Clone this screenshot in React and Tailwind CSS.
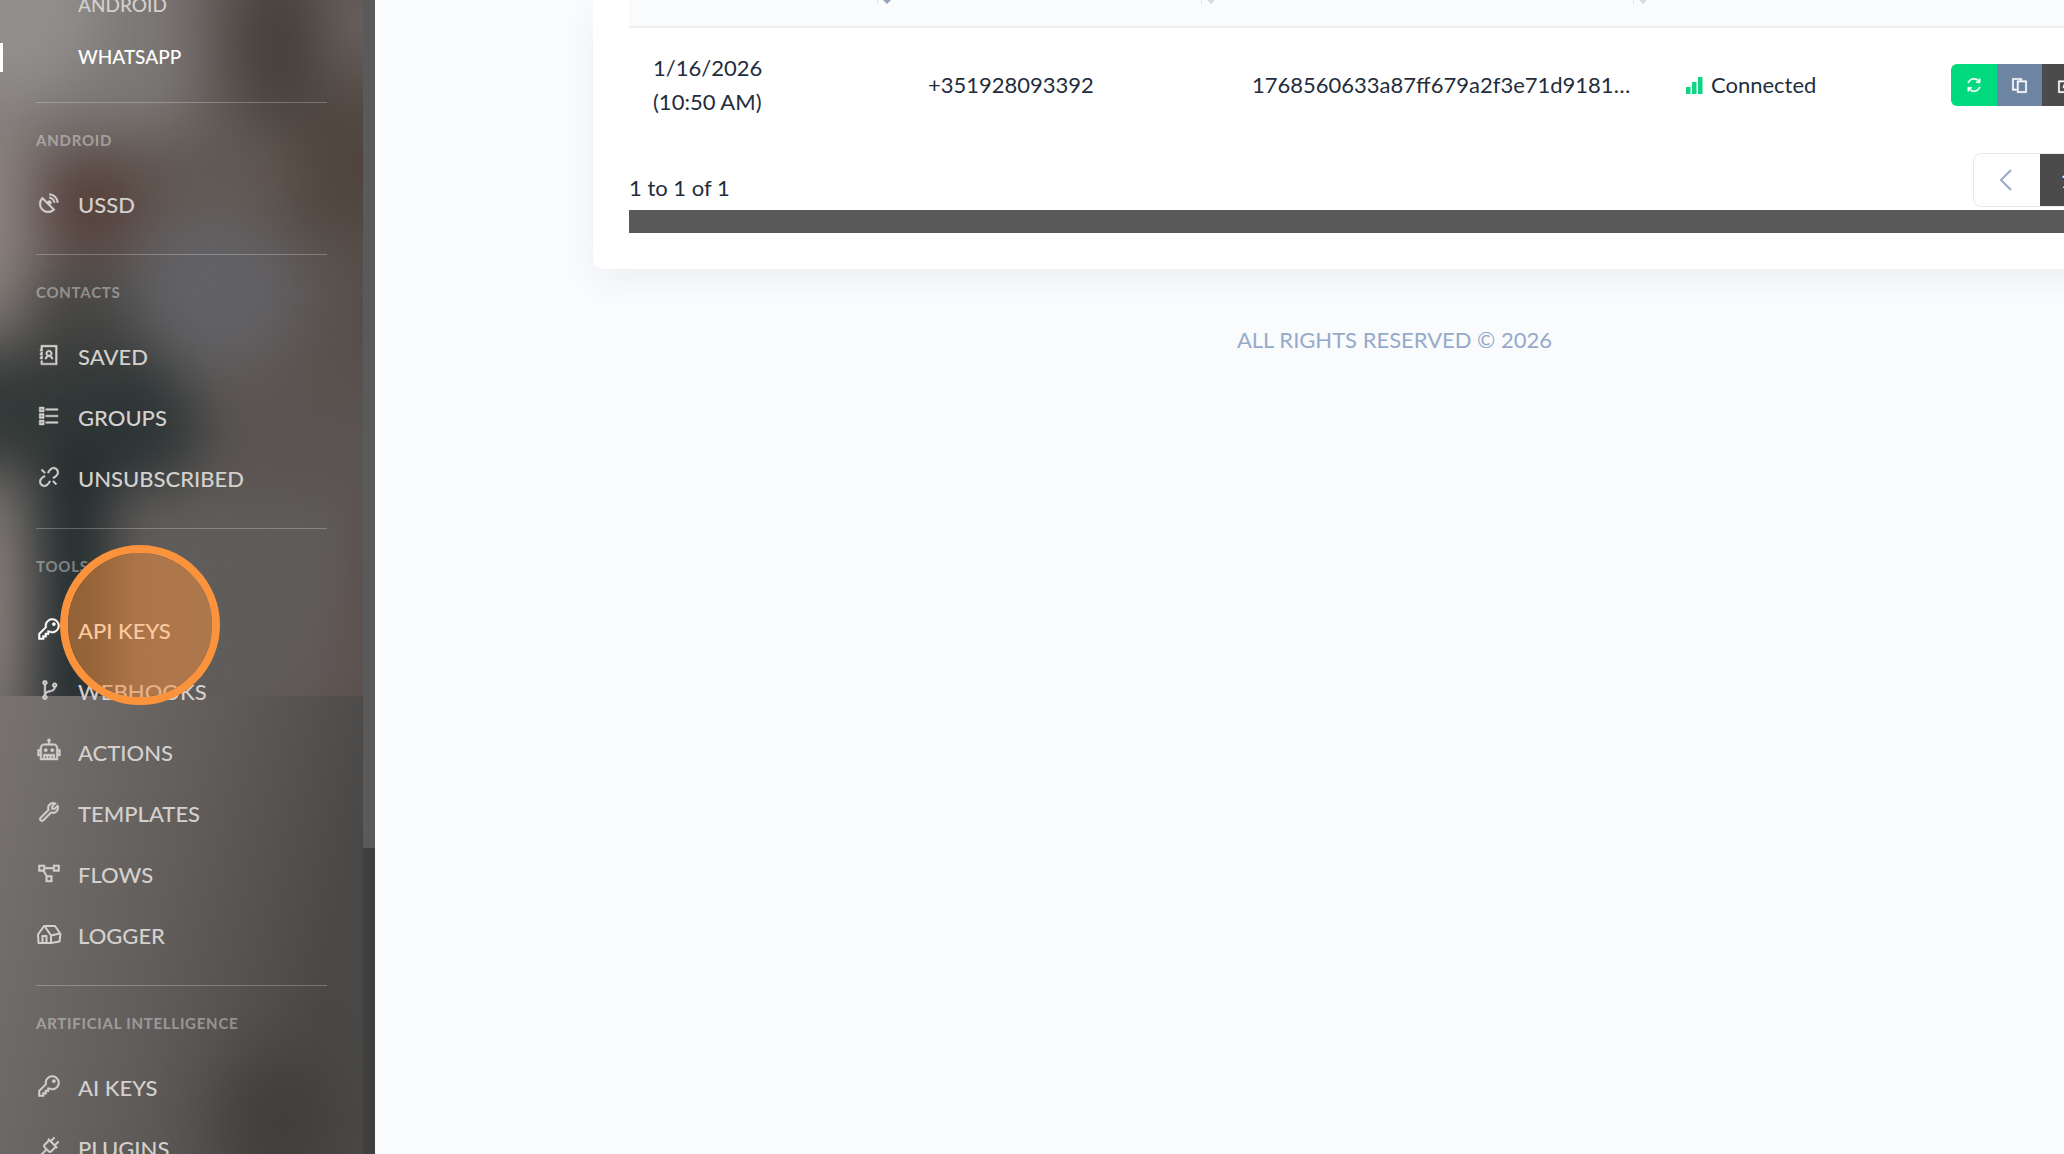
import React from 'react';
import {
    LiaSatelliteDishSolid,
    LiaAddressBook,
    LiaListSolid,
    LiaUnlinkSolid,
    LiaKeySolid,
    LiaCodeBranchSolid,
    LiaRobotSolid,
    LiaWrenchSolid,
    LiaProjectDiagramSolid,
    LiaPlugSolid,
    LiaSyncSolid,
    LiaCopySolid,
    LiaEditSolid,
} from 'react-icons/lia';

const HouseIcon = ({ className }) => (
    <svg viewBox="0 0 26 26" className={className} fill="none" aria-hidden="true">
        <g stroke="currentColor" strokeWidth="2" strokeLinejoin="round">
            <path d="M2 13.5 L8 5 H19 L24.5 13 L23.5 20.5 L15 22 H2.5 Z" />
            <path d="M8.5 5 L15 14.5 L24 12.5 M15 14.5 V22 M6.5 22 V15 H10.5 V22" />
        </g>
    </svg>
);

const SignalIcon = () => (
    <svg viewBox="0 0 17 17" className="h-[17px] w-[17px] fill-[#0fd583]" aria-hidden="true">
        <rect x="0" y="10" width="4.5" height="7" />
        <rect x="6" y="5" width="4.5" height="12" />
        <rect x="12" y="0" width="4.5" height="17" />
    </svg>
);

const sections = [
    { title: 'Android', items: [{ label: 'USSD', icon: LiaSatelliteDishSolid }] },
    {
        title: 'Contacts',
        items: [
            { label: 'Saved', icon: LiaAddressBook },
            { label: 'Groups', icon: LiaListSolid },
            { label: 'Unsubscribed', icon: LiaUnlinkSolid },
        ],
    },
    {
        title: 'Tools',
        items: [
            { label: 'API Keys', icon: LiaKeySolid, active: true },
            { label: 'Webhooks', icon: LiaCodeBranchSolid },
            { label: 'Actions', icon: LiaRobotSolid },
            { label: 'Templates', icon: LiaWrenchSolid },
            { label: 'Flows', icon: LiaProjectDiagramSolid },
            { label: 'Logger', icon: HouseIcon },
        ],
    },
    {
        title: 'Artificial Intelligence',
        items: [
            { label: 'AI Keys', icon: LiaKeySolid },
            { label: 'Plugins', icon: LiaPlugSolid },
        ],
    },
];

// Blurred photo behind the navigation
const SidebarBackdrop = () => (
    <svg className="absolute inset-0 h-full w-full" viewBox="0 0 363 1154" preserveAspectRatio="none" aria-hidden="true">
        <defs>
            <linearGradient id="top" x1="0" x2="1">
                <stop offset="0" stopColor="#736d6a" />
                <stop offset="0.5" stopColor="#625c59" />
                <stop offset="1" stopColor="#574f4b" />
            </linearGradient>
            <linearGradient id="bottom" x1="0" x2="1" y1="0" y2="0.3">
                <stop offset="0" stopColor="#787371" />
                <stop offset="0.55" stopColor="#605d5b" />
                <stop offset="1" stopColor="#4a4846" />
            </linearGradient>
            <filter id="soft" filterUnits="userSpaceOnUse" x="-200" y="-200" width="800" height="1600" colorInterpolationFilters="sRGB">
                <feGaussianBlur stdDeviation="28" />
            </filter>
            <clipPath id="upper">
                <rect width="363" height="696" />
            </clipPath>
        </defs>
        <rect width="363" height="696" fill="url(#top)" />
        <g clipPath="url(#upper)">
            <g filter="url(#soft)">
                <rect x="-100" y="-100" width="290" height="230" fill="#7c7876" />
                <ellipse cx="10" cy="10" rx="90" ry="90" fill="#928e8c" />
                <ellipse cx="280" cy="45" rx="40" ry="80" fill="#443f3b" />
                <ellipse cx="365" cy="20" rx="45" ry="50" fill="#6a615f" />
                <rect x="280" y="100" width="160" height="130" fill="#50463f" />
                <ellipse cx="210" cy="175" rx="90" ry="50" fill="#615953" />
                <ellipse cx="90" cy="205" rx="52" ry="50" fill="#553f3a" />
                <ellipse cx="-20" cy="210" rx="52" ry="110" fill="#8b827f" />
                <rect x="30" y="270" width="110" height="80" fill="#454442" />
                <ellipse cx="215" cy="290" rx="85" ry="75" fill="#626165" />
                <rect x="-100" y="350" width="270" height="120" fill="#333938" />
                <ellipse cx="145" cy="430" rx="60" ry="60" fill="#2e3536" />
                <rect x="230" y="390" width="210" height="110" fill="#5a5452" />
                <rect x="38" y="450" width="72" height="300" fill="#1e282a" />
                <ellipse cx="-25" cy="610" rx="52" ry="100" fill="#857d79" />
                <rect x="160" y="500" width="190" height="210" fill="#5f5d5c" />
                <path d="M375 450 L345 560 L290 710 L375 710 Z" fill="#67504d" opacity="0.4" />
            </g>
        </g>
        <rect y="696" width="363" height="458" fill="url(#bottom)" />
        <ellipse cx="275" cy="1120" rx="60" ry="70" fill="#3f3a36" opacity="0.7" filter="url(#soft)" />
    </svg>
);

const Sidebar = () => (
    <aside className="relative flex h-screen w-[375px] shrink-0 overflow-hidden bg-[#3f3f3f] text-[#d3d0ce]">
        <div className="relative flex-1 overflow-hidden">
            <SidebarBackdrop />
            <nav className="relative -mt-[21px]">
                <ul className="mb-[19px] text-[19px] font-medium uppercase">
                    <li>
                        <a href="#android" className="flex h-[52px] items-center pl-[78px]">Android</a>
                    </li>
                    <li className="flex h-[52px] items-center">
                        <span className="h-[29px] w-[3px] bg-white"></span>
                        <a href="#whatsapp" className="pl-[75px] text-white">WhatsApp</a>
                    </li>
                </ul>
                {sections.map(({ title, items }) => (
                    <section key={title} className="mx-9 border-t border-white/25 pb-[19px]">
                        <h6 className="mt-[22px] mb-[19px] text-[15px] leading-[30px] font-bold tracking-wider text-white/40 uppercase">{title}</h6>
                        <ul>
                            {items.map(({ label, icon: Icon, active }) => (
                                <li key={label}>
                                    <a
                                        href={`#${label.toLowerCase().replace(' ', '-')}`}
                                        className={`flex h-[61px] items-center gap-4 text-[22px] font-medium uppercase ${active ? 'text-white' : ''}`}
                                    >
                                        <Icon className="mb-1 h-[26px] w-[26px] shrink-0 stroke-current stroke-[0.6px]" />
                                        <span>{label}</span>
                                    </a>
                                </li>
                            ))}
                        </ul>
                    </section>
                ))}
            </nav>
        </div>
        <div className="h-[848px] w-3 bg-[#5a5a5a]"></div>
        {/* Click highlight */}
        <div className="pointer-events-none absolute top-[545px] left-[60px] h-40 w-40 rounded-full border-8 border-[#fb923c] bg-[#fb923c]/50 bg-clip-padding"></div>
    </aside>
);

const SortMark = ({ active }) => (
    <svg viewBox="0 0 16 5" className={`ml-auto h-[5px] w-4 ${active ? 'text-[#95a3b8]' : 'text-[#d5dbe1]'}`} aria-hidden="true">
        <path d="M1.5 0 V4" stroke="#dfe3e7" strokeWidth="1" />
        <path d="M7 0 H15 L11 4 Z" fill="currentColor" />
    </svg>
);

const DevicesTable = () => (
    <table className="w-full table-fixed border-collapse text-left">
        <colgroup>
            <col className="w-[275px]" />
            <col className="w-[324px]" />
            <col className="w-[432px]" />
            <col className="w-[267px]" />
            <col />
        </colgroup>
        <thead className="border-b-2 border-[#edf0f3] bg-[#f9fbfd]">
            <tr>
                <th className="h-[27px] pr-3 align-top"><SortMark active /></th>
                <th className="pr-3 align-top"><SortMark /></th>
                <th className="pr-3 align-top"><SortMark /></th>
                <th></th>
                <th></th>
            </tr>
        </thead>
        <tbody>
            <tr>
                <td className="px-6 py-[23px]">
                    1/16/2026
                    <br />
                    (10:50 AM)
                </td>
                <td className="px-6">+351928093392</td>
                <td className="px-6">1768560633a87ff679a2f3e71d9181…</td>
                <td className="px-[26px]">
                    <span className="flex items-center gap-2">
                        <SignalIcon />
                        Connected
                    </span>
                </td>
                <td className="px-6">
                    <div className="flex h-[42px] w-max overflow-hidden rounded-md text-white">
                        <button type="button" aria-label="Refresh" className="flex w-[46px] items-center justify-center bg-[#00d97e]">
                            <LiaSyncSolid className="h-[18px] w-[18px] stroke-current stroke-1" />
                        </button>
                        <button type="button" aria-label="Copy" className="flex w-[45px] items-center justify-center bg-[#6e84a3]">
                            <LiaCopySolid className="h-[19px] w-[19px] stroke-current stroke-1" />
                        </button>
                        <button type="button" aria-label="Edit" className="flex w-[46px] items-center justify-center bg-[#4b4b4b]">
                            <LiaEditSolid className="h-[19px] w-[19px] stroke-current stroke-1" />
                        </button>
                    </div>
                </td>
            </tr>
        </tbody>
    </table>
);

const App = () => (
    <div className="flex h-screen overflow-hidden bg-[#f9fbfd] font-['Lato','Noto_Sans',sans-serif]">
        <Sidebar />
        <main className="min-w-0 flex-1 overflow-hidden">
            {/* The content is wider than the viewport and runs off to the right */}
            <div className="w-[calc(100%+350px)] px-[218px] text-[22px] leading-[34px] text-[#1f2d3d]">
                <div className="rounded-b-[10px] bg-white px-9 pb-9 shadow-[0_12px_36px_rgba(18,38,63,0.05)]">
                    <DevicesTable />
                    <div className="mt-[11px] flex items-end justify-between">
                        <p className="mb-[5px]">1 to 1 of 1</p>
                        <div className="mb-[3px] flex h-[54px] overflow-hidden rounded-lg border border-[#e3ebf0]">
                            <button type="button" aria-label="Previous page" className="flex w-[66px] items-center justify-center pr-1 text-[#95aac9]">
                                <svg viewBox="0 0 13 22" className="h-[22px] w-[13px]" fill="none" stroke="currentColor" strokeWidth="2" aria-hidden="true">
                                    <path d="M12 1 L2 11 L12 21" />
                                </svg>
                            </button>
                            <button type="button" className="w-[54px] bg-[#4b4b4b] text-white">1</button>
                            <button type="button" aria-label="Next page" className="w-[65px]"></button>
                        </div>
                    </div>
                    <div className="h-[23px] bg-[#595959]"></div>
                </div>
                <footer className="pt-[54px] text-center text-[#95aac9]">ALL RIGHTS RESERVED © 2026</footer>
            </div>
        </main>
    </div>
);

export default App;
